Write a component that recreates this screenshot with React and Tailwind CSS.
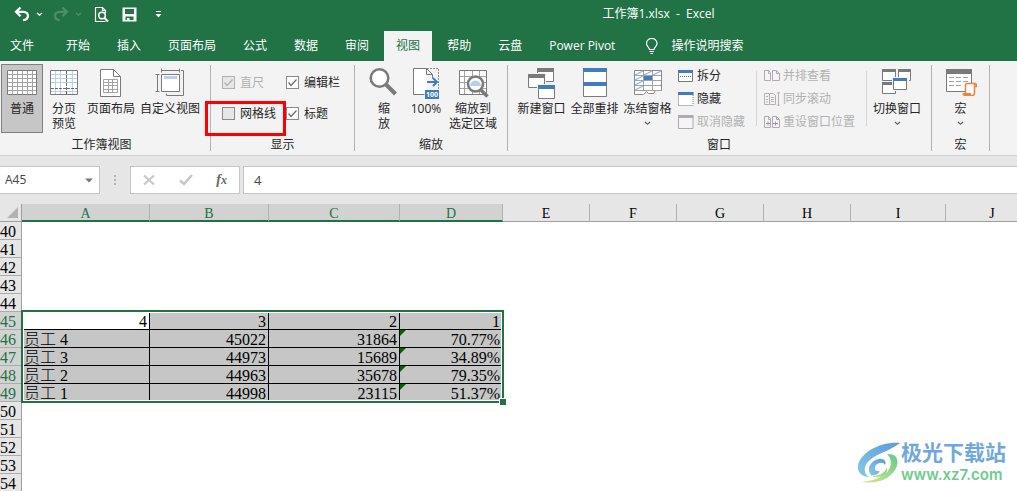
import { useState } from "react";

const tabs = ["开始", "插入", "页面布局", "公式", "数据", "审阅", "视图", "帮助", "云盘", "Power Pivot"];

const columns = [
  { name: "A", width: "w-[128px]", selected: true },
  { name: "B", width: "w-[119px]", selected: true },
  { name: "C", width: "w-[131px]", selected: true },
  { name: "D", width: "w-[103px]", selected: true },
  { name: "E", width: "w-[87px]" },
  { name: "F", width: "w-[87px]" },
  { name: "G", width: "w-[87px]" },
  { name: "H", width: "w-[87px]" },
  { name: "I", width: "w-[95px]" },
  { name: "J", width: "w-[93px]" },
];

const rowNumbers = [40, 41, 42, 43, 44, 45, 46, 47, 48, 49, 50, 51, 52, 53, 54];

const data = {
  45: ["4", "3", "2", "1"],
  46: ["员工 4", "45022", "31864", "70.77%"],
  47: ["员工 3", "44973", "15689", "34.89%"],
  48: ["员工 2", "44963", "35678", "79.35%"],
  49: ["员工 1", "44998", "23115", "51.37%"],
};

/* ---------- Icons ---------- */

function Icon({ w = 32, h = 32, className = "", children }) {
  return (
    <svg width={w} height={h} viewBox={`0 0 ${w} ${h}`} fill="none" className={`shrink-0 ${className}`} aria-hidden="true">
      {children}
    </svg>
  );
}

function Chevron({ className = "" }) {
  return (
    <Icon w={7} h={5} className={className}>
      <path d="M1 1l2.5 2.2L6 1" stroke="currentColor" strokeWidth="1.3" />
    </Icon>
  );
}

function UndoIcon({ className = "" }) {
  return (
    <Icon w={16} h={16} className={className}>
      <path d="M6.5 1.5L2 5.8l4.5 4.4M2.2 5.8H9.500c6 0 6 8-.3 8.400" stroke="currentColor" strokeWidth="2.2" />
    </Icon>
  );
}

function PreviewIcon() {
  return (
    <Icon w={16} h={17}>
      <path d="M11.500 15.500H1.500v-14h7l3 3v2.500M8.500 1.500v3h3" stroke="#fff" strokeWidth="1.200" />
      <circle cx="8" cy="9.500" r="3.300" stroke="#fff" strokeWidth="1.600" />
      <path d="M10.500 12l3.500 3.500" stroke="#fff" strokeWidth="2" />
    </Icon>
  );
}

function SaveIcon() {
  return (
    <Icon w={15} h={15}>
      <path d="M.5.5h14v14H.5z" fill="#fff" />
      <path d="M3 2h9v5H3zM3.500 9.500h8V13h-8z" fill="#217346" />
      <path d="M5 11h2.500v3H5z" fill="#fff" />
    </Icon>
  );
}

function BulbIcon() {
  return (
    <Icon w={14} h={17}>
      <path d="M4.500 11.500c0-2-3-3-3-6a5.200 5 0 0 1 10.500 0c0 3-3 4-3 6zM4.500 13.500h4.500M5.500 15.500h2.500" stroke="#fff" strokeWidth="1.200" />
    </Icon>
  );
}

function NormalIcon() {
  return (
    <Icon>
      <path d="M1.500 3.500h29v24h-29z" fill="#fff" stroke="#7a7a7a" />
      <path d="M2 7.500h28M2 11.500h28M2 15.500h28M2 19.500h28M2 23.500h28M6.500 4v23M11.500 4v23M16.500 4v23M21.500 4v23M26.500 4v23" stroke="#a3a3a3" />
    </Icon>
  );
}

function PageBreakIcon() {
  return (
    <Icon>
      <path d="M2.500 3.500h27v24h-27z" fill="#fff" stroke="#7a7a7a" />
      <path d="M3 7.500h26M3 11.500h26M3 15.500h26M3 24.500h26M7.500 4v23M12.500 4v23M24.500 4v23" stroke="#b9cfe8" />
      <path d="M18.500 4v23M3 21.500h26" stroke="#6d6d6d" strokeDasharray="3 1" />
    </Icon>
  );
}

function PageLayoutIcon() {
  return (
    <Icon>
      <path d="M5.500 2.500h13l7 7v20h-20z" fill="#fff" stroke="#7a7a7a" />
      <path d="M18.500 2.500v7h7" stroke="#7a7a7a" />
      <path d="M8.500 12.500h14v13h-14zM8.500 15.500h14M8.500 18.500h14M8.500 22.500h14M13.500 12.500v13M17.500 12.500v13" stroke="#a3a3a3" />
    </Icon>
  );
}

function CustomViewIcon() {
  return (
    <Icon>
      <path d="M7.500 7.500h18v17h-18z" fill="#fff" stroke="#7a7a7a" />
      <path d="M10 9h13v3H10z" fill="#b9cfe8" />
      <path d="M7.500 3.500h18M7.500 1.500v4M25.500 1.500v4M3.500 7.500v17M1.500 7.500h4M1.500 24.500h4M27 3.500h2.500v25h-17v-2" stroke="#7a7a7a" />
    </Icon>
  );
}

function ZoomIcon() {
  return (
    <Icon>
      <circle cx="11.500" cy="11" r="8.800" fill="#fff" stroke="#7a7a7a" strokeWidth="2.500" />
      <path d="M18 17.500l9.500 9.500" stroke="#7a7a7a" strokeWidth="4" />
    </Icon>
  );
}

function HundredIcon() {
  return (
    <Icon>
      <path d="M16.500 1.500h-13v26h13z" fill="#fff" />
      <path d="M14.500 27.500h-11v-26h13l6 6v4M16.500 1.500v6h6" stroke="#7a7a7a" />
      <path d="M17 1.500h11.500V22" stroke="#8c8c8c" strokeDasharray="2 1" />
      <path d="M17 15h10M23 11l4 4-4 4" stroke="#3f7dbe" strokeWidth="2" />
      <path d="M15 23h14v9H15z" fill="#3f7dbe" />
      <text x="22" y="30" textAnchor="middle" fill="#fff" fontSize="7" fontWeight="700" fontFamily="Open Sans, sans-serif">100</text>
    </Icon>
  );
}

function ZoomSelectionIcon() {
  return (
    <Icon>
      <path d="M2.500 3.500h27v24h-27z" fill="#fff" stroke="#7a7a7a" />
      <path d="M3 9.500h26M3 15.500h26M3 21.500h26M7.500 4v23M15.500 4v23M22.500 4v23" stroke="#a3a3a3" />
      <circle cx="18.500" cy="17" r="7.500" fill="#fff" stroke="#7a7a7a" strokeWidth="2.500" />
      <path d="M13 19a5.500 5.500 0 0 1 11 0z" fill="#b9cfe8" />
      <path d="M24 23l6.500 6.500" stroke="#7a7a7a" strokeWidth="3.500" />
    </Icon>
  );
}

function NewWindowIcon() {
  return (
    <Icon>
      <path d="M11.500 1.500h16v13h-16z" fill="#fff" stroke="#7a7a7a" />
      <path d="M11 1h17v4H11z" fill="#7a7a7a" />
      <path d="M1 6h19v16H1z" fill="#f3f3f3" />
      <path d="M2.500 7.500h16v13h-16z" fill="#fff" stroke="#7a7a7a" />
      <path d="M2 7h17v4H2z" fill="#7a7a7a" />
      <path d="M11 17h19v15H11z" fill="#f3f3f3" />
      <path d="M12.500 18.500h16v13h-16z" fill="#fff" stroke="#7a7a7a" />
      <path d="M12 18h17v4H12z" fill="#3f7dbe" />
    </Icon>
  );
}

function ArrangeAllIcon() {
  return (
    <Icon>
      <path d="M4.500 1.500h23v28h-23z" fill="#fff" stroke="#7a7a7a" />
      <path d="M4 1h24v4H4zM4 15h24v4H4z" fill="#3f7dbe" />
    </Icon>
  );
}

function FreezeIcon() {
  return (
    <Icon>
      <path d="M2.500 3.500h27v20h-6l-2 3h-5l-2-2-3 3h-9z" fill="#fff" stroke="#8a8a8a" />
      <path d="M3 8.500h26M3 13.500h26M3 18.500h26M3 23.500h26M11.500 4v20M20.500 4v20" stroke="#a3a3a3" />
      <path d="M3 8l8-4M12 8l8-4M21 8l8-4M3 13l8-4M3 18l8-4M3 23l8-4" stroke="#8fb4dc" strokeWidth="1.300" />
      <path d="M12 9h8v4h-8z" fill="#3f7dbe" />
    </Icon>
  );
}

function SwitchIcon() {
  return (
    <Icon>
      <path d="M1.500 2.500h13v11h-13zM17.500 2.500h12v11h-12zM1.500 15.500h13v11h-13z" fill="#fff" stroke="#7a7a7a" />
      <path d="M1 2h14v3H1zM17 2h13v3H17zM1 15h14v3H1z" fill="#7a7a7a" />
      <path d="M11 10h17v14H11z" fill="#f3f3f3" />
      <path d="M12.500 11.500h13v11h-13z" fill="#fff" stroke="#7a7a7a" />
      <path d="M12 11h14v3H12z" fill="#3f7dbe" />
    </Icon>
  );
}

function MacroIcon() {
  return (
    <Icon>
      <path d="M1.500 2.500h25v22h-25z" fill="#fff" stroke="#7a7a7a" />
      <path d="M1 2h26v5H1z" fill="#7a7a7a" />
      <path d="M4 10.500h20M4 14.500h20M4 18.500h14" stroke="#a3a3a3" strokeDasharray="5 2" />
      <path d="M20 16h10v11H20z" fill="#fff" />
      <path d="M20.500 26V18q0-1.500 1.500-1.500h7.500v9q0 3-2.500 3M29.500 16.500q2.500 0 2 3h-2" stroke="#e8853a" strokeWidth="1.500" />
      <path d="M17.500 26H26q0 3 2 3h-8.500q-2 0-2-3z" fill="#e8853a" />
    </Icon>
  );
}

function SplitIcon() {
  return (
    <Icon w={16} h={14}>
      <path d="M.5 1.500h14v11H.5z" fill="#fff" stroke="#7a7a7a" />
      <path d="M0 1h15v3H0z" fill="#3f7dbe" />
      <path d="M2 7.500h11" stroke="#3f7dbe" strokeDasharray="1 1" />
    </Icon>
  );
}

function HideIcon() {
  return (
    <Icon w={16} h={14}>
      <path d="M.5 1.500h14.500v12H.5z" fill="#fff" stroke="#7a7a7a" strokeDasharray="1 1" />
      <path d="M0 0h15.500v3H0z" fill="#3f7dbe" />
    </Icon>
  );
}

function UnhideIcon() {
  return (
    <Icon w={16} h={14}>
      <path d="M.5.5H15v13H.5z" stroke="#adadad" fill="#f6f4f6" />
      <path d="M0 0h15.500v3H0z" fill="#adadad" />
    </Icon>
  );
}

function SideBySideIcon() {
  return (
    <Icon w={17} h={14}>
      <path d="M1.500 1.500h4l2 2v8h-6zM9.500 1.500h4l3 3v7h-7zM5.500 1.500v3h2M13.500 1.500v3h3" stroke="#b3a9b5" fill="#f7f2f8" />
    </Icon>
  );
}

function SyncScrollIcon() {
  return (
    <Icon w={17} h={16}>
      <path d="M6 2.500H1.500v11H6M6.500 2.500h4l2 2v9h-6zM3 5.500h2M3 8.500h2M3 11h2M8 6.500h3M8 8.500h3M8 10.500h3M15.500 1v14M14 2.500l1.500-1.500 1.500 1.500M14 13.500l1.500 1.500 1.500-1.500" stroke="#b3b0b3" />
    </Icon>
  );
}

function ResetPositionIcon() {
  return (
    <Icon w={17} h={14}>
      <path d="M1.500 1.500h4l2 2v9h-6zM9.500 1.500h4l3 3v8h-7zM5.500 1.500v3h2M13.500 1.500v3h3" stroke="#b3a9b5" fill="#f7f2f8" />
      <path d="M3 8.500h4M5 6.500v4M10 8.500h5M12.500 6.500v4" stroke="#9c9c9c" />
    </Icon>
  );
}

function SwirlLogo() {
  return (
    <Icon w={44} h={42}>
      <defs>
        <linearGradient id="swirl-blue" x1="0" y1="1" x2="1" y2="0">
          <stop offset="0" stopColor="#86c8e4" />
          <stop offset="1" stopColor="#5a9bdc" />
        </linearGradient>
        <linearGradient id="swirl-green" x1="0" y1="1" x2="1" y2="0">
          <stop offset="0" stopColor="#dcea92" />
          <stop offset="1" stopColor="#63c98c" />
        </linearGradient>
      </defs>
      <path d="M43 1C25-1 3 10 1 24c-1 7 5 11 11 11-8-5-4-15 5-20 8-5 15-6 26-14z" fill="url(#swirl-blue)" />
      <path d="M14 33c-5-6 0-15 8-16 5-1 8 3 6 6-1-3-6-3-9 0-3 4 0 7 4 6-2 4-6 5-9 4z" fill="url(#swirl-blue)" />
      <path d="M30 12c11-1 13 8 8 16C31 39 17 42 4 40c11-1 21-4 27-11 4-6 4-12-1-17z" fill="url(#swirl-green)" />
      <path d="M13 33c7 2 14-1 17-7 1 7-8 13-17 7z" fill="url(#swirl-green)" />
    </Icon>
  );
}

/* ---------- Ribbon parts ---------- */

function Group({ label, labelClass = "pr-2", className = "", children }) {
  return (
    <section aria-label={label} className={`flex h-[87px] flex-col ${className}`}>
      <div className="flex h-[70px] shrink-0">{children}</div>
      <div className={`mt-0.5 text-center leading-[17px] ${labelClass}`}>{label}</div>
    </section>
  );
}

function Separator() {
  return <div className="mt-px h-[86px] w-px shrink-0 bg-[#b1b1b1]" />;
}

function BigButton({ icon, lines, width, active, menu }) {
  return (
    <button
      className={`flex h-[69px] shrink-0 flex-col items-center border pt-0.5 leading-[15px] whitespace-nowrap ${width} ${
        active ? "border-[#7f7f7f] bg-[#c6c6c6]" : "border-transparent hover:bg-[#d5d5d5]"
      }`}
    >
      {icon}
      <span className="mt-0.5">
        {lines.map((line) => (
          <span key={line} className="block">
            {line}
          </span>
        ))}
      </span>
      {menu && <Chevron className="mt-[5px] text-[#666]" />}
    </button>
  );
}

function SmallButton({ icon, label, disabled }) {
  return (
    <button disabled={disabled} className="flex h-[23px] items-center gap-[3px] whitespace-nowrap text-[#262626] disabled:text-[#b1b1b1]">
      <span className="flex w-[17px] justify-center">{icon}</span>
      {label}
    </button>
  );
}

function Check({ label, defaultChecked, disabled }) {
  return (
    <label className={`flex h-[31px] items-center gap-[5px] whitespace-nowrap ${disabled ? "text-[#b1b1b1]" : ""}`}>
      <span className="grid">
        <input
          type="checkbox"
          defaultChecked={defaultChecked}
          disabled={disabled}
          className="peer col-start-1 row-start-1 size-[13px] appearance-none border border-[#8a8a8a] bg-[#e6e6e6] checked:bg-white disabled:border-[#b1b1b1] disabled:bg-[#e6e6e6]"
        />
        <svg viewBox="0 0 13 13" fill="none" className="pointer-events-none invisible col-start-1 row-start-1 size-[13px] peer-checked:visible">
          <path d="M2.500 6.500l2.500 3L10.500 3.500" stroke={disabled ? "#b1b1b1" : "#6a6a6a"} strokeWidth="1.200" />
        </svg>
      </span>
      {label}
    </label>
  );
}

function TitleBar() {
  return (
    <header className="flex h-[31px] items-start text-white">
      <div className="flex h-7 shrink-0 items-center pl-[14px]">
        <button aria-label="撤消"><UndoIcon /></button>
        <button aria-label="撤消选项" className="ml-1.5"><Chevron /></button>
        <button aria-label="恢复" className="ml-2.5 text-[#4d8f6b]"><UndoIcon className="-scale-x-100" /></button>
        <button aria-label="恢复选项" className="ml-1.5 text-[#4d8f6b]"><Chevron /></button>
        <button aria-label="打印预览" className="ml-3"><PreviewIcon /></button>
        <button aria-label="保存" className="ml-3"><SaveIcon /></button>
        <button aria-label="自定义快速访问工具栏" className="ml-[18px]">
          <Icon w={7} h={7}>
            <path d="M1 .5h5" stroke="#fff" />
            <path d="M.5 3h6l-3 3.500z" fill="#fff" />
          </Icon>
        </button>
      </div>
      <h1 className="flex-1 pl-[138px] text-center leading-7 whitespace-pre">工作簿1.xlsx  -  Excel</h1>
    </header>
  );
}

function Tabs() {
  const [active, setActive] = useState("视图");

  return (
    <nav className="flex h-[30px] gap-[3px] whitespace-nowrap text-white">
      <button className="pr-[17px] pl-[10px]">文件</button>
      {tabs.map((tab) => (
        <button
          key={tab}
          onClick={() => setActive(tab)}
          className={`px-3 ${tab === active ? "bg-[#f3f3f3] text-[#217346]" : "hover:bg-[#185c37]"}`}
        >
          {tab}
        </button>
      ))}
      <button className="flex items-center gap-3 pl-[15px]">
        <BulbIcon />
        操作说明搜索
      </button>
    </nav>
  );
}

function Ribbon() {
  return (
    <div className="flex h-[95px] overflow-hidden border-b border-[#d0d0d0] bg-[#f3f3f3] pt-[3px] text-[#262626]">
      <Group label="工作簿视图" className="w-[210px] pl-px">
        <BigButton icon={<NormalIcon />} lines={["普通"]} width="w-[42px]" active />
        <BigButton icon={<PageBreakIcon />} lines={["分页", "预览"]} width="w-[42px]" />
        <BigButton icon={<PageLayoutIcon />} lines={["页面布局"]} width="w-[52px]" />
        <BigButton icon={<CustomViewIcon />} lines={["自定义视图"]} width="w-[66px]" />
      </Group>
      <Separator />

      <Group label="显示" className="w-[143px] pl-2">
        <div className="grid grid-cols-[64px_auto] content-start pt-[3px] pl-[3px]">
          <Check label="直尺" defaultChecked disabled />
          <Check label="编辑栏" defaultChecked />
          <div className="relative">
            <Check label="网格线" />
            <div className="pointer-events-none absolute top-[3px] -left-[17px] h-[35px] w-[81px] border-3 border-[#fe0000]" />
          </div>
          <Check label="标题" defaultChecked />
        </div>
      </Group>
      <Separator />

      <Group label="缩放" className="w-[152px] pl-2">
        <BigButton icon={<ZoomIcon />} lines={["缩", "放"]} width="w-[42px]" />
        <BigButton icon={<HundredIcon />} lines={["100%"]} width="w-[42px]" />
        <BigButton icon={<ZoomSelectionIcon />} lines={["缩放到", "选定区域"]} width="w-[52px]" />
      </Group>
      <Separator />

      <Group label="窗口" className="w-[423px] pl-[7px]">
        <BigButton icon={<NewWindowIcon />} lines={["新建窗口"]} width="w-[53px]" />
        <BigButton icon={<ArrangeAllIcon />} lines={["全部重排"]} width="w-[53px]" />
        <BigButton icon={<FreezeIcon />} lines={["冻结窗格"]} width="w-[53px]" menu />
        <div className="w-[82px] pl-[3px]">
          <SmallButton icon={<SplitIcon />} label="拆分" />
          <SmallButton icon={<HideIcon />} label="隐藏" />
          <SmallButton icon={<UnhideIcon />} label="取消隐藏" disabled />
        </div>
        <div className="mt-[7px] h-[55px] w-px bg-[#d5d5d5]" />
        <div className="w-[109px] pl-[6px]">
          <SmallButton icon={<SideBySideIcon />} label="并排查看" disabled />
          <SmallButton icon={<SyncScrollIcon />} label="同步滚动" disabled />
          <SmallButton icon={<ResetPositionIcon />} label="重设窗口位置" disabled />
        </div>
        <div className="mt-[7px] h-[55px] w-px bg-[#d5d5d5]" />
        <BigButton icon={<SwitchIcon />} lines={["切换窗口"]} width="w-[60px]" menu />
      </Group>
      <Separator />

      <Group label="宏" labelClass="pr-0" className="w-[57px]">
        <BigButton icon={<MacroIcon />} lines={["宏"]} width="w-[57px]" menu />
      </Group>
      <Separator />
    </div>
  );
}

function FormulaBar() {
  return (
    <div className="flex h-12 items-center bg-[#e6e6e6] text-[#444]">
      <div className="flex h-7 w-[100px] items-center border border-l-0 border-[#c6c6c6] bg-white pr-1.5 pl-[5px]">
        <input aria-label="名称框" defaultValue="A45" className="min-w-0 flex-1 outline-none" />
        <button aria-label="名称列表">
          <Icon w={8} h={5}>
            <path d="M0 .5h8L4 4.500z" fill="#777" />
          </Icon>
        </button>
      </div>
      <div className="flex w-[30px] flex-col items-center gap-0.5">
        <span className="size-0.5 bg-[#b1b1b1]" />
        <span className="size-0.5 bg-[#b1b1b1]" />
        <span className="size-0.5 bg-[#b1b1b1]" />
      </div>
      <div className="flex h-7 w-[110px] items-center justify-between border border-[#c6c6c6] bg-white pr-3 pl-3">
        <button aria-label="取消">
          <Icon w={12} h={12}>
            <path d="M1 1.500l10 9M11 1.500l-10 9" stroke="#c6c6c6" strokeWidth="2" />
          </Icon>
        </button>
        <button aria-label="输入">
          <Icon w={14} h={12}>
            <path d="M1 6.500l4 3.500 8-9" stroke="#c6c6c6" strokeWidth="2.500" />
          </Icon>
        </button>
        <button aria-label="插入函数" className="font-['Liberation_Serif',serif] text-sm leading-4 font-bold italic text-[#666]">
          f<span className="text-xs">x</span>
        </button>
      </div>
      <input
        aria-label="编辑栏"
        defaultValue="4"
        className="ml-[3px] h-7 min-w-0 flex-1 border border-r-0 border-[#c6c6c6] bg-white px-[10px] text-[13px] outline-none"
      />
    </div>
  );
}

function Cell({ row, col }) {
  const values = data[row];
  if (!values || col > 3) {
    return <td className="border-b border-transparent p-0" />;
  }

  const isActive = row === 45 && col === 0;
  const hasWarning = row > 45 && col === 3;

  return (
    <td
      className={`relative border-r border-b border-black px-0.5 pt-0.5 pb-0 ${isActive ? "bg-white" : "bg-[#c6c6c6]"} ${
        row > 45 && col === 0 ? "text-left" : "text-right"
      }`}
    >
      {hasWarning && (
        <svg viewBox="0 0 6 6" className="absolute top-0 left-0 size-1.5" aria-hidden="true">
          <path d="M0 0h6L0 6z" fill="#006100" />
        </svg>
      )}
      {values[col]}
    </td>
  );
}

function Sheet() {
  return (
    <main className="relative flex-1 overflow-hidden bg-white">
      <table className="w-[1039px] table-fixed border-separate border-spacing-0 font-['Liberation_Serif','Noto_Sans_CJK_SC',serif] text-base leading-[15px] font-light text-black">
        <thead>
          <tr className="h-[18px] bg-[#e6e6e6]">
            <th className="w-[22px] border-r border-b border-[#9f9f9f] p-0" aria-label="全选">
              <svg viewBox="0 0 11 11" className="ml-[7px] block size-[11px]" aria-hidden="true">
                <path d="M11 0v11H0z" fill="#b3b3b3" />
              </svg>
            </th>
            {columns.map(({ name, width, selected }) => (
              <th
                key={name}
                className={`border-r px-0 pt-[3px] pb-0 text-sm font-normal ${width} ${
                  selected
                    ? "border-b-2 border-r-[#b1b1b1] border-b-[#217346] bg-[#d2d2d2] leading-[13px] text-[#217346]"
                    : "border-b border-r-[#b1b1b1] border-b-[#9f9f9f] leading-[14px]"
                }`}
              >
                {name}
              </th>
            ))}
          </tr>
        </thead>
        <tbody>
          {rowNumbers.map((row) => (
            <tr key={row} className="h-[18px]">
              <th
                className={`border-r border-b border-r-[#9f9f9f] border-b-[#ababab] px-0 pt-0.5 pb-0 text-left font-normal ${
                  data[row] ? "bg-[#d2d2d2] text-[#217346]" : "bg-[#e6e6e6]"
                }`}
              >
                {row}
              </th>
              {columns.map(({ name }, col) => (
                <Cell key={name} row={row} col={col} />
              ))}
            </tr>
          ))}
        </tbody>
      </table>

      {/* Selected range A45:D49 */}
      <div className="pointer-events-none absolute top-[106px] left-[21px] h-[93px] w-[483px] border-2 border-[#217346]">
        <div className="h-full border border-white" />
        <div className="absolute -right-1 -bottom-1 size-[7px] border-t border-l border-white bg-[#217346]" />
      </div>

      <div className="absolute right-[11px] bottom-[6px] flex items-center">
        <SwirlLogo />
        <div className="whitespace-nowrap">
          <div className="font-['Liberation_Sans','Noto_Sans_CJK_SC',sans-serif] text-[21px] leading-6 font-bold text-[#6fa8dc]">极光下载站</div>
          <div className="font-['Inter',sans-serif] text-[15px] leading-5 font-semibold text-[#6ccb8d]">www.xz7.com</div>
        </div>
      </div>
    </main>
  );
}

export default function App() {
  return (
    <div className="flex h-screen flex-col overflow-hidden bg-[#217346] font-['Open_Sans','Noto_Sans_CJK_SC',sans-serif] text-xs">
      <TitleBar />
      <Tabs />
      <Ribbon />
      <FormulaBar />
      <Sheet />
    </div>
  );
}
